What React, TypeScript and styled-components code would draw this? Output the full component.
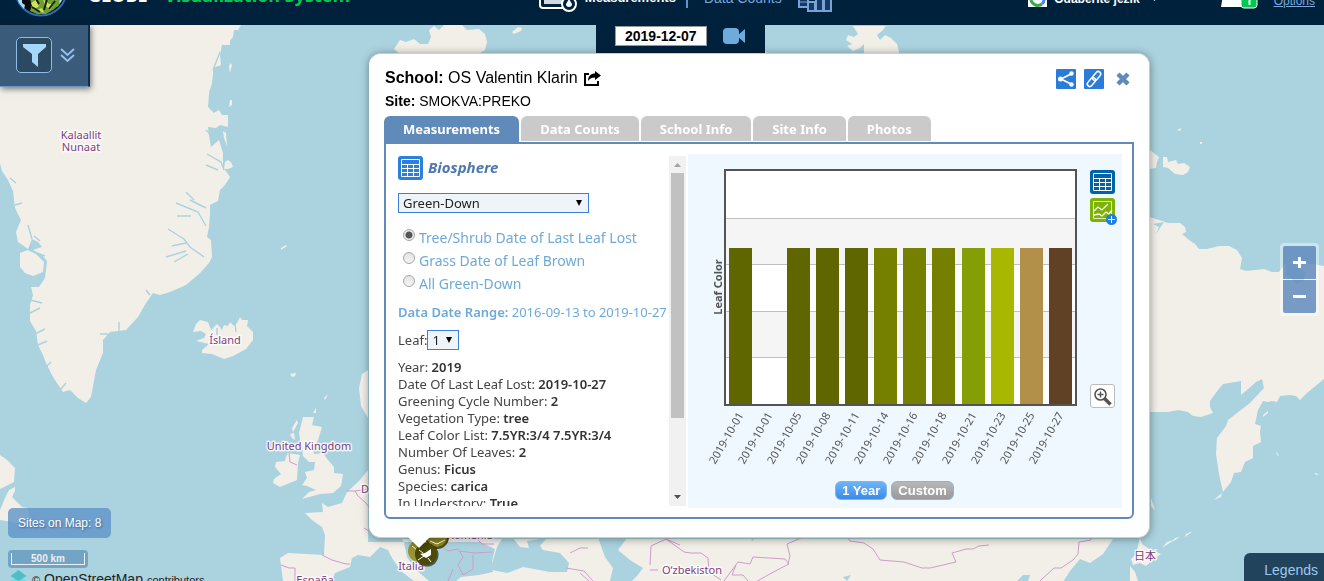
import React, { useState } from 'react';
import styled, { createGlobalStyle, css } from 'styled-components';

const sans = '"Liberation Sans", Arial, sans-serif';
const humanist = '"Noto Sans", "Noto Sans CJK JP", sans-serif';
const navy = '#00213c';
const steel = '#5f8aba';
const sea = '#aad3df';
const land = '#f2efe9';

const GlobalStyle = createGlobalStyle`
  *, *::before, *::after { box-sizing: border-box; }
  body { margin: 0; font-family: ${sans}; overflow: hidden; }
  button, input, select { font: inherit; margin: 0; }
  svg { display: block; flex: none; }
`;

const Page = styled.div`
  display: flex;
  flex-direction: column;
  height: 100vh;
  overflow: hidden;
  background: ${sea};
`;

/* ---------- header ---------- */

const Header = styled.header`
  display: grid;
  grid-template-columns: 40.7% 1fr auto;
  grid-template-rows: 25px;
  align-items: end;
  flex: none;
  height: 25px;
  overflow: hidden;
  background: ${navy};
  color: #fff;
`;

const Brand = styled.div`
  display: flex;
  align-items: flex-end;
  gap: 20px;
  padding: 0 0 8px 14px;
`;

const Title = styled.h1`
  margin: 0;
  padding-bottom: 10px;
  font: 700 18px/24px "Open Sans", sans-serif;
  white-space: nowrap;
  span { margin-left: 12px; color: #00c853; }
`;

const Nav = styled.nav`
  display: flex;
  align-items: flex-end;
  padding-bottom: 13px;
`;

const NavLink = styled.a<{ $active?: boolean }>`
  padding-bottom: 6px;
  font-size: ${(p) => (p.$active ? 13 : 14)}px;
  font-weight: ${(p) => (p.$active ? 700 : 400)};
  line-height: 16px;
  white-space: nowrap;
  text-decoration: none;
  color: ${(p) => (p.$active ? '#fff' : '#77a9dd')};
`;

const Divider = styled.span`
  width: 2px;
  height: 16px;
  margin: 0 16px 4px 10px;
  background: #5d96cc;
`;

const NavGap = styled.span`
  width: 8px;
`;

const Tools = styled.div`
  display: flex;
  align-items: flex-end;
  padding: 0 9px 16px 0;
`;

const Language = styled.button`
  display: flex;
  align-items: flex-end;
  gap: 7px;
  margin-right: 55px;
  padding: 0 0 2px;
  border: 0;
  background: none;
  color: #fff;
  font-size: 12px;
  font-weight: 700;
  line-height: 16px;
`;

const Options = styled.a`
  margin-left: 16px;
  font-size: 12px;
  line-height: 16px;
  color: #77a9dd;
`;

/* ---------- map and its overlays ---------- */

const MapArea = styled.main`
  position: relative;
  flex: 1;
  min-height: 0;
`;

const MapSvg = styled.svg`
  width: 100%;
  height: 100%;
  text {
    font: 11px ${humanist};
    fill: #80417f;
    stroke: #fff;
    stroke-width: 3px;
    stroke-opacity: 0.8;
    stroke-linejoin: round;
    paint-order: stroke;
  }
`;

const FilterBar = styled.aside`
  position: absolute;
  left: 0;
  top: 0;
  display: flex;
  align-items: center;
  gap: 8px;
  padding: 12px 13px 13px 16px;
  border-right: 2px solid #0b2f52;
  border-bottom: 1px solid #6a97c6;
  background: #3a5b7a;
  box-shadow: 1px 2px 6px rgba(0, 0, 0, 0.5);
`;

const FilterButton = styled.button`
  display: grid;
  place-items: center;
  width: 36px;
  height: 36px;
  padding: 0;
  border: 1px solid #8fbbea;
  border-radius: 5px;
  background: #2b4a61;
`;

const PlainButton = styled.button`
  display: grid;
  place-items: center;
  padding: 0;
  border: 0;
  background: none;
`;

const DateBar = styled.div`
  position: absolute;
  left: 45%;
  top: 0;
  display: flex;
  align-items: flex-start;
  gap: 15px;
  height: 30px;
  padding: 1px 19px 0;
  background: ${navy};
`;

const DateInput = styled.input`
  width: 92px;
  height: 20px;
  padding: 0;
  border: 1px solid #999;
  background: #fff;
  color: #000;
  font-size: 14px;
  font-weight: 700;
  text-align: center;
`;

const ZoomControl = styled.div`
  position: absolute;
  right: 5px;
  top: 218px;
  display: grid;
  gap: 1px;
  padding: 3px;
  border-radius: 4px;
  background: rgba(255, 255, 255, 0.4);
`;

const ZoomButton = styled.button<{ $bottom?: boolean }>`
  width: 33px;
  height: 33px;
  padding: 0;
  border: 0;
  border-radius: ${(p) => (p.$bottom ? '0 0 2px 2px' : '2px 2px 0 0')};
  background: rgba(77, 124, 181, 0.75);
  display: grid;
  place-items: center;
`;

const MapInfo = styled.div`
  position: absolute;
  left: 8px;
  bottom: -7px;
  display: flex;
  flex-direction: column;
  align-items: flex-start;
`;

const SiteCount = styled.div`
  padding: 7px 10px;
  border-radius: 5px;
  background: rgba(95, 148, 200, 0.8);
  color: #fff;
  font-size: 12px;
  line-height: 16px;
  text-shadow: 1px 1px 2px #355d85;
`;

const ScaleBox = styled.div`
  width: 80px;
  margin-top: 12px;
  padding: 3px;
  border-radius: 4px;
  background: rgba(95, 148, 190, 0.75);
`;

const ScaleLine = styled.div`
  height: 12px;
  border: 1px solid #eee;
  border-top: 0;
  color: #eee;
  font-size: 10px;
  font-weight: 700;
  line-height: 12px;
  text-align: center;
`;

const Attribution = styled.div`
  display: flex;
  align-items: baseline;
  gap: 4px;
  height: 20px;
  padding-left: 2px;
  color: #222;
  font-size: 11px;
  line-height: 22px;
  svg { align-self: flex-start; margin-right: 1px; }
  a { font-size: 14px; color: #222; text-decoration: none; }
`;

const Legends = styled.button`
  position: absolute;
  right: 0;
  bottom: 0;
  padding: 9px 6px 3px 20px;
  border: 0;
  border-radius: 6px 0 0 0;
  background: #22435c;
  color: #9fc8f0;
  font-size: 14px;
  line-height: 16px;
`;

/* ---------- popup ---------- */

const Popup = styled.section`
  position: absolute;
  left: 369px;
  right: 174px;
  top: 28px;
  padding: 14px 15px 18px;
  border: 1px solid #ccc;
  border-width: 1px 1px 1px 0;
  border-radius: 12px;
  background: #fff;
  color: #000;
  filter: drop-shadow(0 1px 4px rgba(0, 0, 0, 0.4));
  &::after {
    content: '';
    position: absolute;
    left: 39px;
    top: 100%;
    border: 11px solid transparent;
    border-top-color: #fff;
    border-bottom-width: 0;
  }
`;

const PopupHead = styled.div`
  display: flex;
  justify-content: space-between;
  align-items: flex-start;
  margin-bottom: 6px;
  padding: 0 3px 0 1px;
`;

const School = styled.h2`
  display: flex;
  align-items: center;
  gap: 5px;
  margin: 0 0 4px;
  font-size: 16px;
  font-weight: 400;
  line-height: 20px;
`;

const Site = styled.p`
  margin: 0;
  font-size: 14px;
  line-height: 18px;
`;

const PopupActions = styled.div`
  display: flex;
  align-items: center;
  gap: 8px;
  padding-top: 1px;
  button:last-child { margin-left: 3px; }
`;

const BlueButton = styled(PlainButton)`
  width: 20px;
  height: 20px;
  border-radius: 1px;
  background: #2b7cd9;
`;

const Tabs = styled.div`
  display: flex;
  gap: 2px;
  height: 26px;
`;

const Tab = styled.button<{ $active?: boolean }>`
  height: ${(p) => (p.$active ? 26 : 25)}px;
  padding: ${(p) => (p.$active ? '0 19px' : '1px 19px 0')};
  border: 0;
  border-radius: 6px 6px 0 0;
  background: ${(p) => (p.$active ? steel : '#cacaca')};
  color: #fff;
  font: 700 13px/24px ${humanist};
  white-space: nowrap;
`;

const TabPanel = styled.div`
  display: flex;
  gap: 2px;
  height: 377px;
  padding: 10px 10px 9px 12px;
  border: 2px solid ${steel};
  border-radius: 0 0 6px 6px;
  font-family: ${humanist};
`;

const Scroller = styled.div`
  display: flex;
  flex: 0 0 288px;
  padding: 2px 0;
`;

const Details = styled.div`
  flex: 1;
  overflow: hidden;
  color: #444;
  font-size: 13px;
  line-height: 17px;
  white-space: nowrap;
`;

const ScrollBar = styled.div`
  display: flex;
  flex-direction: column;
  flex: 0 0 17px;
  align-items: center;
  justify-content: space-between;
  background: #f1f1f1;
`;

const Thumb = styled.div`
  width: 13px;
  height: 245px;
  margin-bottom: auto;
  background: #c1c1c1;
`;

const Category = styled.h3`
  display: flex;
  align-items: center;
  gap: 5px;
  height: 24px;
  margin: 0 0 13px;
  color: #4f77b0;
  font-size: 15px;
  font-style: italic;
  font-weight: 700;
  line-height: 20px;
  span { padding-bottom: 2px; }
`;

const SelectWrap = styled.span<{ $width: number }>`
  display: flex;
  position: relative;
  width: ${(p) => p.$width}px;
  select {
    width: 100%;
    height: 20px;
    padding: 0 4px;
    appearance: none;
    border: 1px solid #3b80dd;
    border-radius: 0;
    background: #eff4f8;
    color: #222;
    font-size: 13px;
    line-height: 18px;
  }
  svg {
    position: absolute;
    right: 6px;
    top: 6px;
    pointer-events: none;
  }
`;

const Radios = styled.fieldset`
  display: grid;
  margin: 13px 0 9px;
  padding: 0 0 0 5px;
  border: 0;
`;

const RadioLabel = styled.label`
  display: flex;
  align-items: center;
  gap: 4px;
  height: 23px;
  color: #6eaad8;
  font-size: 14px;
  line-height: 17px;
`;

const Radio = styled.input`
  width: 12px;
  height: 12px;
  margin-bottom: 6px;
  appearance: none;
  border: 1px solid #a5a5a5;
  border-radius: 50%;
  background: linear-gradient(#e4e4e4, #f4f4f4);
  &:checked {
    background: radial-gradient(circle, #555 0 3px, #eee 4px);
  }
`;

const Range = styled.p`
  margin: 0;
  color: #6eaad8;
  b { font-weight: 600; }
`;

const LeafRow = styled.div`
  display: flex;
  align-items: center;
  height: 20px;
  margin: 9px 0 9px;
`;

const Facts = styled.ul`
  margin: 0;
  padding: 0;
  list-style: none;
  strong { color: #333; font-weight: 600; }
`;

const ChartPanel = styled.div`
  display: grid;
  grid-template-columns: minmax(0, 1fr) auto;
  grid-template-rows: 320px auto;
  column-gap: 11px;
  align-content: start;
  flex: 1;
  min-width: 0;
  background: #eff7ff;
`;

const ChartSvg = styled.svg`
  width: 100%;
  height: 320px;
  text { font: 11px ${humanist}; fill: #555; }
`;

const AxisTitle = styled.text`
  && { font-weight: 700; }
`;

const ChartTools = styled.div`
  display: flex;
  flex-direction: column;
  align-items: flex-start;
  gap: 4px;
  padding: 16px 5px 66px 0;
`;

const Magnify = styled(PlainButton)`
  width: 25px;
  height: 24px;
  margin-top: auto;
  border: 1px solid #bbb;
  border-radius: 3px;
  background: #fff;
`;

const Periods = styled.div`
  grid-column: 1 / -1;
  display: flex;
  justify-content: center;
  gap: 4px;
  padding: 7px 21px 0 0;
`;

const Period = styled.button<{ $active?: boolean }>`
  height: 19px;
  padding: 0 6px;
  border: 1px solid #7fb5ea;
  border-radius: 6px;
  color: #fff;
  font: 700 13px/17px ${sans};
  ${(p) =>
    p.$active
      ? css`background: linear-gradient(#6fb3f8, #3a8be6);`
      : css`background: linear-gradient(#b8b8b8, #999);`}
`;

/* ---------- icons ---------- */

const TableIcon = ({ color }: { color: string }) => (
  <svg width="25" height="24" viewBox="0 0 25 24">
    <rect width="25" height="24" rx="3" fill={color} />
    <path d="M3.500 3.500h18v17h-18zM3.500 8.500h18M3.500 12.500h18M3.500 16.500h18M9.500 8.500v12M15.500 8.500v12" fill="none" stroke="#fff" />
  </svg>
);

const GraphAddIcon = () => (
  <svg width="27" height="27" viewBox="0 0 27 27">
    <rect width="25" height="24" rx="3" fill="#7cb305" />
    <path d="M3.500 3.500h18v17h-18z" fill="none" stroke="#dcefb0" />
    <path d="M4 13l4-4 4 3 6-6M4 17l5-1 3 2 4-4 3 2 3-4" fill="none" stroke="#fff" strokeWidth="1.300" />
    <circle cx="21.500" cy="21.500" r="5.500" fill="#1f7fe5" />
    <path d="M18 21.500h7M21.500 18v7" stroke="#fff" />
  </svg>
);

const Caret = () => (
  <svg width="8" height="8" viewBox="0 0 8 8">
    <path d="M1 1h6L4 7z" fill="#000" />
  </svg>
);

const GlobeLogo = () => (
  <svg width="54" height="54" viewBox="0 0 54 54">
    <circle cx="27" cy="27" r="25.500" fill="#0a0d10" stroke="#2f6cb3" strokeWidth="2" />
    <path d="M3 34l5 0 0 6 3 2-1 4-5-6zM50 34l-5 0-1 5-2 4 1 1 4-5z" fill="#a9dcf5" />
    <path d="M15 33l10 2 6-2 9 4 6-3-1 8-6 5-7 4-9 0-7-3 2-6z" fill="#6f9f2e" />
    <path d="M17 40l5-3 3 6-5 4zM29 36l6 5 5 0-4 6-5-5zM23 47l5-2 2 5z" fill="#d4df62" />
    <path d="M21 34l4 7M33 36l-3 11M41 38l-6 8M18 44l8 5" stroke="#11250f" strokeWidth="2" />
  </svg>
);

/* ---------- map drawing ---------- */

const landShapes = [
  'M0 25H241l-3 5-6 0-2 10 0 5-8 0-2 10 1 10-8 3 0 6-1 9-3 11-1 13 6 6 5-3 3 5 6 0 0 12-8-2-4 3-8-1 1 9 2 11 8-7 4 13 0 14 7 10-5 8-5 5-2 11-8 4 0 9-1 13-2 10 4 3 1 17-3 6-9 10-14 12-16 7-10 3-7-2-7 10-8 14-12 13-16 2-7 8 0 13-7 17-5 27-5 6-8-5-8-8-7 2-10-15-7-14-3-8-5-10-2-14-6-10 0-16 3-10-2-8 8 0 6-9 2-17-5-6-9-5 9-3-4-5-6-3-4 10-10-7-2-10 5-12-6-12-2-17-5-11-6-9-2-8z',
  'M20 253l8-3 8 4 8 8-1 10-10 4-8-3-5-6z',
  'M219 31l3-4 12 2-1 8-5 6-9-1 2-7 4-4z',
  'M225 162l3-2 3 2 2 5-5 2-4 0zM223 131l3 2 1 13-3-8zM230 63l2 2-2 8-1-6zM230 100l2 0 0 5-3 2z',
  'M193 332l3-8 4-4 8 2 3 8 6-6 3 3 2 3 2-5 4 1 2-4 4 4 3-3 3-6 2 3 6 0-1 6 6 6 0 8-7 9-13 7-9 3-12-5-10-1 0-3 7-6-13-3 8-3 2-4-5-3z',
  'M0 455l7 5 8 8-1 14-14 7z',
  'M15 487l0 4-3 6 10 10 6 1 2 12-6 4-24-4v-10l5-12 4-8z',
  'M303 417l11 0-2 8 10 2-4 13-5 10 1 4 9-1 5 7 6 7 0 6 9 1-2 12-8 7-13 1-18 5 7-7 7-2-9-4-5-1 5-7-2-6 9-2 1-8-6 0-6-6-1-9-2-8-1-6z',
  'M288 453l12 2-2 8-1 17-17 7-7-4 1-4 7-5-6-7 1-5 9-1 1-4z',
  'M292 428l5-8 1 3-5 9zM290 434l4-1 1 7-3-2zM281 545l5-4M290 374l6-1-1 3-3 1zM324 398l4-4-3 6zM313 413l3-5 0 5z',
  'M281 248l5-3 1 1-6 4z',
  'M368 370l-6 4-3 14 2 18 7 12z',
  'M368 470l-8 10-13 12-5 11-14 4-6-4 1 9-18 1 7 7 10 7 3 8-1 20-36-2-8 5 3 23H332l3-8 15-6 2-9 6-3 12 2 10-10 8 3 5 10 9 12 12 9H440l-12-16-10-12-12-8-4-6H1113l-10 15-13 9-10-4-10 12-7 11H455l6-5 18-2 14-3-1-3 0-8 3-12-15-7H368z',
  'M394 49l6-9 6 2 8-3 6 5 8 0 3-7-2-7 5-4 5 4 5-5h18l5 5 12-1 6 5 2 8-2 8-7 4-60 1-18-1z',
  'M512 32l6-5 4 1-1 3-7 3z',
  'M853 26h33l-4 5-5 4 3 5 5-5 6 3 6 6 3 12-36 1 0-13-4 4-7 3-6-5 5-2-6-4 2-5 6 2 4-3z',
  'M765 51l8 6-6 0z',
  'M1150 150l9 7-2 5-1 6-6 1z',
  'M1163 157l4 0 1 5 8-2 2 4 6-1 6 4-2 5-5 3-8-1-7-6-5-1z',
  'M1177 130l4-2-1 3zM1200 142l2 0 0 2-2 0z',
  'M1150 217l18 6 12 0 5 4 1 5-4 2 7 6 6 4 4 5 8 0 12-3 10 0 8 4 5 8-2 11 6 2 18-2 8 3 7 0 6-8 12-3 15 3 12 2V379l-17 14-7 7-4-4-6-1-10 1-3 6-5-1-4 1-5-1-5 9-3 14 6 2-1 6 1 10-8 4 0 12-8 4-4 10-7 1-3 9-8 10-4-18-3-20 1-16 9-12 2-6 22-17 14-15-2-9-6 3-8 7-7 6 0-14-18 3-5 6-8 11 0 6 3 6-12 4-8-1-5-4-10-2-10 2H1150z',
  'M1151 498l4 12-4-4zM1215 499l7-6-1 4-7 3zM1212 506l-4 5M1193 531l-8 6 1-3zM1180 537l-8 5 3-4zM1174 540l-12 8 5-6zM1158 549l-8 5 5-5zM1276 451l3 5-2-1zM1314 473l5 1-3 1zM1263 415l5-4 0 2-5 4z',
  'M1140 538l2 6 7 5 12 5-7 5-8 7-6-3-7 2-2-6 5-5zM1130 566l5 6 3 9h-8z',
];

const waterShapes = [
  'M512 537l8 10 9 1-2-7 20-3-7 8 3 4 17 3 9 10-2 9-17 0-27-5-16 6-15-3-1-4 3-9 3-10 5-8z',
  'M598 537l29 1-9 12 12 10 13 8-6 8-5 5h-22l3-13-8-11-4-11z',
  'M380 547l10 8 8 12 10 14h-28z',
  'M404 543l10 3 10 14 16 15 3 6h-14l-14-12-8-12z',
  'M843 577l8-2-4 6zM1017 581l6-6 7 0-2 6z',
  'M750 538l4 0-1 3z',
  'M1153 224l11-2-8 12 3-7z',
];

const fjords = 'M220 52l-7 18M222 98l-12-6 3-8M206 130l8 8M207 154l14 8 3 8M206 165l12 5M186 192l8 8M190 200l16 8M176 203l22 9 8 14M177 216l14 0M168 229l16 10 6 8 14 10M172 246l14-3M166 257l20-6M174 262l14-8M28 225l4 14M34 236l6 5M45 256l-16-6M30 300l12 3M28 314l12-6M35 334l10-5M38 345l9-4M45 368l6-6M60 390l6-7M10 178l6 5M15 205l7-2M146 290l4 5M119 322l0 10M108 334l-8 0M235 324l1 8M217 328l0 7';

const borders = [
  'M322 555l10 5 14 4 4 0M281 565l8 3 6 0 0 13M289 453l1 9 7 3M347 491l8 0 3 5 8 7 3 4M355 491l13-2M364 528l5 3',
  'M440 545l8 6 10-2 5 8-5 8 5 10 10-6 0-14M448 581l5-12M460 551l14 2 18-1M476 538l6 6 12 0M425 540l12 8M580 573l9 8M566 568l18 3 9 10M570 553l10-5 8 0',
  'M650 565l1-19 15-7 14 6M650 570l8 0M666 539l18 13 7 1 10 0 7 5 1 14 12 8',
  'M724 581l14-19 12 2 3-7 32 2 4 5-8 4-13 7-14 8M736 565l-4 10 11 0 5 6M788 564l2-8-3-12 14-6',
  'M848 538l2 3 14 2 9 6 7 11 24 2 18 6 8 0 26-6-4-9 14-4 7 0 6-3 10-1',
  'M1040 581l14-13 7 0 12-8 5-6 1-12 12-2 0-3',
].join('');

const MapDrawing = () => (
  <MapSvg viewBox="0 25 1324 556" preserveAspectRatio="xMinYMin slice" role="img" aria-label="Map">
    <path d={landShapes.join('')} fill={land} />
    <path d={waterShapes.join('')} fill={sea} />
    <path d={fjords} fill="none" stroke={sea} strokeWidth="1.400" />
    <path d="M1287 262l8 2 10 8-1 8-7 4-6-6-6-3z" fill={sea} />
    <path d={borders} fill="none" stroke="#cf9bcb" />
    <g textAnchor="middle">
      <text x="81" y="139">Kalaallit</text>
      <text x="81" y="151">Nunaat</text>
      <text x="225" y="344">Ísland</text>
      <text x="309" y="450">United Kingdom</text>
      <text x="365" y="493">D</text>
      <text x="315" y="584">España</text>
      <text x="411" y="570">Italia</text>
      <text x="470" y="539">România</text>
      <text x="692" y="574">O‘zbekiston</text>
      <text x="1145" y="560">日本</text>
    </g>
    <g>
      <circle cx="437" cy="537" r="11" fill="#8a8420" stroke="#4f4d0b" strokeWidth="2" />
      <path d="M430 541l7 3 8-4" fill="none" stroke="#fff" />
      <circle cx="419" cy="551" r="11" fill="#9c9530" />
      <path d="M412 546l5 4 3 7" fill="none" stroke="#fff" />
      <circle cx="427" cy="555" r="11.500" fill="#222" opacity=".7" />
      <circle cx="426" cy="554" r="11" fill="#4d4a05" />
      <path d="M420 554l5-1 6-4 0 6-5 3z" fill="#fff" />
      <path d="M418 560l6-4M419 550l4 3M428 558l3 4" fill="none" stroke="#fff" />
    </g>
  </MapSvg>
);

/* ---------- data ---------- */

const tabs = ['Measurements', 'Data Counts', 'School Info', 'Site Info', 'Photos'];
const radios = ['Tree/Shrub Date of Last Leaf Lost', 'Grass Date of Leaf Brown', 'All Green-Down'];

const facts = [
  ['Year', '2019'],
  ['Date Of Last Leaf Lost', '2019-10-27'],
  ['Greening Cycle Number', '2'],
  ['Vegetation Type', 'tree'],
  ['Leaf Color List', '7.5YR:3/4 7.5YR:3/4'],
  ['Number Of Leaves', '2'],
  ['Genus', 'Ficus'],
  ['Species', 'carica'],
  ['In Understory', 'True'],
];

const bars: [string, string | null][] = [
  ['2019-10-01', '#5f6600'],
  ['2019-10-01', null],
  ['2019-10-05', '#5f6600'],
  ['2019-10-08', '#5f6600'],
  ['2019-10-11', '#5f6600'],
  ['2019-10-14', '#768000'],
  ['2019-10-16', '#768000'],
  ['2019-10-18', '#768000'],
  ['2019-10-21', '#849e05'],
  ['2019-10-23', '#a8b800'],
  ['2019-10-25', '#b3904a'],
  ['2019-10-27', '#614126'],
];

const LeafChart = () => (
  <ChartSvg viewBox="0 0 391 320" preserveAspectRatio="xMinYMin meet" role="img" aria-label="Leaf Color">
    <rect x="37" y="16" width="351" height="235" fill="#fff" />
    <path d="M37 64h351v46H37zM37 157h351v46H37z" fill="#f5f5f5" />
    <path d="M37 64.500h351M37 110.500h351M37 157.500h351M37 203.500h351" stroke="#c0c0c0" />
    {bars.map(([date, color], i) => {
      const x = 41 + i * 29 + (i > 7 ? 1 : 0);
      return (
        <g key={i}>
          {color && <rect x={x} y="94" width="23" height="157" fill={color} />}
          <text textAnchor="end" transform={`translate(${x + 15} 261) rotate(-60)`}>{date}</text>
        </g>
      );
    })}
    <rect x="37" y="16" width="351" height="235" fill="none" stroke="#545454" strokeWidth="2" />
    <AxisTitle textAnchor="middle" transform="translate(34 133) rotate(-90)">Leaf Color</AxisTitle>
  </ChartSvg>
);

export default function App() {
  const [selected, setSelected] = useState(0);
  const [date, setDate] = useState('2019-12-07');

  return (
    <Page>
      <GlobalStyle />
      <Header>
        <Brand>
          <GlobeLogo />
          <Title>GLOBE <span>Visualization System</span></Title>
        </Brand>
        <Nav>
          <svg width="38" height="30" viewBox="0 0 38 30">
            <rect x="1" y="2" width="30" height="24" rx="3" fill="#00213c" stroke="#fff" strokeWidth="2" />
            <path d="M5 6h22v16H5z" fill="#cfd9e4" />
            <circle cx="30" cy="22" r="7" fill="#00213c" stroke="#fff" strokeWidth="2" />
            <path d="M30 17l3 5a3 3 0 1 1-6 0z" fill="#fff" />
          </svg>
          <NavGap />
          <NavLink href="#measurements" $active>Measurements</NavLink>
          <Divider />
          <NavLink href="#counts">Data Counts</NavLink>
          <NavGap /><NavGap />
          <svg width="35" height="28" viewBox="0 0 35 28">
            <path d="M1 14h9v9H1zM10 18h7v9h-7zM18 8h7v19h-7zM26 4h7v23h-7z" fill="#17385f" stroke="#77a2dc" strokeWidth="2" />
            <path d="M1 18h9" stroke="#77a2dc" />
          </svg>
        </Nav>
        <Tools>
          <Language>
            <svg width="19" height="18" viewBox="0 0 19 18">
              <path d="M0 0h19v18H0z" fill="#fff" />
              <path d="M3 11a7 7 0 0 0 11 4" fill="none" stroke="#34a853" strokeWidth="3" />
              <path d="M14 15a7 7 0 0 0 2-6h-6" fill="none" stroke="#4285f4" strokeWidth="3" />
            </svg>
            Odaberite jezik
            <svg width="18" height="16" viewBox="0 0 18 16"><path d="M4 6h7l-3.500 4z" fill="#fff" /></svg>
          </Language>
          <svg width="38" height="20" viewBox="0 0 38 20">
            <path d="M4 0h20v18H1z" fill="#fff" />
            <rect x="21" y="3" width="16" height="16" rx="3" fill="#00c853" stroke="#fff" />
            <path d="M29.500 9v7" stroke="#fff" strokeWidth="2" />
          </svg>
          <Options href="#options">Options</Options>
        </Tools>
      </Header>

      <MapArea>
        <MapDrawing />

        <FilterBar>
          <FilterButton aria-label="Filter">
            <svg width="24" height="24" viewBox="0 0 24 24"><path d="M1 1h23v3l-8 7v13l-6-5v-8L1 4z" fill="#a5d7f8" /></svg>
          </FilterButton>
          <PlainButton aria-label="Expand filters">
            <svg width="15" height="15" viewBox="0 0 15 15">
              <path d="M1 1l6.500 6L14 1M1 7l6.500 6L14 7" fill="none" stroke="#93bfee" strokeWidth="2" />
            </svg>
          </PlainButton>
        </FilterBar>

        <DateBar>
          <DateInput aria-label="Date" value={date} onChange={(e) => setDate(e.target.value)} />
          <PlainButton aria-label="Animate">
            <svg width="24" height="20" viewBox="0 0 24 20">
              <rect x="1" y="2" width="16" height="16" rx="4" fill="#6dabdd" />
              <path d="M16 9l7-6v14l-7-6z" fill="#6dabdd" />
            </svg>
          </PlainButton>
        </DateBar>

        <ZoomControl>
          <ZoomButton aria-label="Zoom in">
            <svg width="13" height="13" viewBox="0 0 13 13"><path d="M0 6.500h13M6.500 1v11" stroke="#fff" strokeWidth="3" /></svg>
          </ZoomButton>
          <ZoomButton aria-label="Zoom out" $bottom>
            <svg width="13" height="13" viewBox="0 0 13 13"><path d="M0 6.500h13" stroke="#fff" strokeWidth="3" /></svg>
          </ZoomButton>
        </ZoomControl>

        <MapInfo>
          <SiteCount>Sites on Map: 8</SiteCount>
          <ScaleBox><ScaleLine>500 km</ScaleLine></ScaleBox>
          <Attribution>
            <svg width="17" height="18" viewBox="0 0 17 18">
              <path d="M8.500 8l8 5v5h-16v-5z" fill="#75dbe0" />
              <path d="M8.500 2l8 6-8 5-8-5z" fill="#4dbfcb" />
            </svg>
            © <a href="#osm">OpenStreetMap</a> contributors
          </Attribution>
        </MapInfo>

        <Legends>Legends</Legends>

        <Popup>
          <PopupHead>
            <div>
              <School>
                <span><b>School:</b> OS Valentin Klarin</span>
                <svg width="19" height="17" viewBox="0 0 19 17">
                  <path d="M6 4H2v11h13v-4" fill="none" stroke="#000" strokeWidth="2" />
                  <path d="M5 11c0-5 3-7.500 7-7.500V1l6 4.500-6 4.500V7.500c-3 0-5 .500-7 3.500z" fill="#000" />
                </svg>
              </School>
              <Site><b>Site:</b> SMOKVA:PREKO</Site>
            </div>
            <PopupActions>
              <BlueButton aria-label="Share">
                <svg width="20" height="20" viewBox="0 0 20 20">
                  <path d="M15 5L5 10l10 5" fill="none" stroke="#fff" strokeWidth="1.800" />
                  <g fill="#fff"><circle cx="15.500" cy="4.500" r="2.200" /><circle cx="4.500" cy="10" r="2.500" /><circle cx="15.500" cy="15.500" r="2.200" /></g>
                </svg>
              </BlueButton>
              <BlueButton aria-label="Copy link">
                <svg width="20" height="20" viewBox="0 0 20 20">
                  <g transform="rotate(-50 10 10)" fill="none" stroke="#fff" strokeWidth="1.500">
                    <rect x="1" y="7.500" width="10" height="5" rx="2.500" />
                    <rect x="9" y="7.500" width="10" height="5" rx="2.500" />
                  </g>
                </svg>
              </BlueButton>
              <PlainButton aria-label="Close">
                <svg width="16" height="16" viewBox="0 0 16 16"><path d="M3 3l10 10M13 3L3 13" stroke={steel} strokeWidth="4.500" /></svg>
              </PlainButton>
            </PopupActions>
          </PopupHead>

          <Tabs role="tablist">
            {tabs.map((t, i) => <Tab key={t} role="tab" $active={i === 0}>{t}</Tab>)}
          </Tabs>

          <TabPanel>
            <Scroller>
              <Details>
                <Category><TableIcon color="#2b7fdd" /><span>Biosphere</span></Category>
                <SelectWrap $width={191}>
                  <select aria-label="Protocol"><option>Green-Down</option></select>
                  <Caret />
                </SelectWrap>
                <Radios>
                  {radios.map((r, i) => (
                    <RadioLabel key={r}>
                      <Radio type="radio" name="dataset" checked={selected === i} onChange={() => setSelected(i)} />
                      {r}
                    </RadioLabel>
                  ))}
                </Radios>
                <Range><b>Data Date Range:</b> 2016-09-13 to 2019-10-27</Range>
                <LeafRow>
                  <label htmlFor="leaf">Leaf:</label>
                  <SelectWrap $width={32}>
                    <select id="leaf"><option>1</option></select>
                    <Caret />
                  </SelectWrap>
                </LeafRow>
                <Facts>
                  {facts.map(([k, v]) => <li key={k}>{k}: <strong>{v}</strong></li>)}
                </Facts>
              </Details>
              <ScrollBar>
                <svg width="17" height="17" viewBox="0 0 17 17"><path d="M5 11h7L8.500 7z" fill="#a3a3a3" /></svg>
                <Thumb />
                <svg width="17" height="17" viewBox="0 0 17 17"><path d="M5 6h7l-3.500 4z" fill="#505050" /></svg>
              </ScrollBar>
            </Scroller>

            <ChartPanel>
              <LeafChart />
              <ChartTools>
                <PlainButton aria-label="Show table"><TableIcon color="#0062a8" /></PlainButton>
                <PlainButton aria-label="Add to graph"><GraphAddIcon /></PlainButton>
                <Magnify aria-label="Enlarge chart">
                  <svg width="19" height="19" viewBox="0 0 19 19">
                    <circle cx="7.500" cy="7.500" r="5.500" fill="none" stroke="#555" strokeWidth="1.600" />
                    <path d="M4.500 7.500h6M7.500 4.500v6" stroke="#555" strokeWidth="1.400" />
                    <path d="M11.500 11.500l6 6" stroke="#555" strokeWidth="3.500" />
                  </svg>
                </Magnify>
              </ChartTools>
              <Periods>
                <Period $active>1 Year</Period>
                <Period>Custom</Period>
              </Periods>
            </ChartPanel>
          </TabPanel>
        </Popup>
      </MapArea>
    </Page>
  );
}
